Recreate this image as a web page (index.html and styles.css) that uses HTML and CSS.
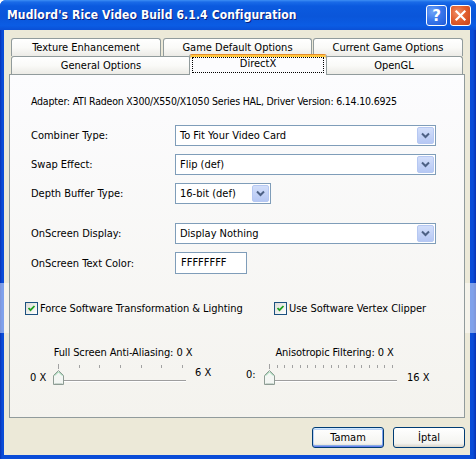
FILE: index.html
```html
<!DOCTYPE html>
<html>
<head>
<meta charset="utf-8">
<link rel="stylesheet" href="styles.css">
</head>
<body>
<div class="window">
  <div class="titlebar">
    <span class="title">Mudlord's Rice Video Build 6.1.4 Configuration</span>
    <div class="tbtns">
      <span class="tbtn help">?</span>
      <span class="tbtn close"><svg width="13" height="13" viewBox="0 0 13 13"><path d="M2.5 2.5 L10.5 10.5 M10.5 2.5 L2.5 10.5" stroke="#fff" stroke-width="2.2" stroke-linecap="square"/></svg></span>
    </div>
  </div>
  <div class="client">
    <div class="tabs">
      <div class="tabrow">
        <div class="tab t-tex">Texture Enhancement</div>
        <div class="tab t-gdo">Game Default Options</div>
        <div class="tab t-cgo">Current Game Options</div>
      </div>
      <div class="tabrow">
        <div class="tab t-gen">General Options</div>
        <div class="tab sel t-dx"><span class="focus">DirectX</span></div>
        <div class="tab t-ogl">OpenGL</div>
      </div>
    </div>
    <div class="panel">
      <div class="adapter">Adapter: ATI Radeon X300/X550/X1050 Series HAL, Driver Version: 6.14.10.6925</div>
      <div class="row r-comb">
        <span class="lbl">Combiner Type:</span>
        <div class="combo wide"><span class="val">To Fit Your Video Card</span><span class="arrow"><svg width="9" height="7" viewBox="0 0 9 7"><path d="M1 1.5 L4.5 5 L8 1.5" fill="none" stroke="#4D6185" stroke-width="2"/></svg></span></div>
      </div>
      <div class="row r-swap">
        <span class="lbl">Swap Effect:</span>
        <div class="combo wide"><span class="val">Flip (def)</span><span class="arrow"><svg width="9" height="7" viewBox="0 0 9 7"><path d="M1 1.5 L4.5 5 L8 1.5" fill="none" stroke="#4D6185" stroke-width="2"/></svg></span></div>
      </div>
      <div class="row r-depth">
        <span class="lbl">Depth Buffer Type:</span>
        <div class="combo short"><span class="val">16-bit (def)</span><span class="arrow"><svg width="9" height="7" viewBox="0 0 9 7"><path d="M1 1.5 L4.5 5 L8 1.5" fill="none" stroke="#4D6185" stroke-width="2"/></svg></span></div>
      </div>
      <div class="row r-osd">
        <span class="lbl">OnScreen Display:</span>
        <div class="combo wide"><span class="val">Display Nothing</span><span class="arrow"><svg width="9" height="7" viewBox="0 0 9 7"><path d="M1 1.5 L4.5 5 L8 1.5" fill="none" stroke="#4D6185" stroke-width="2"/></svg></span></div>
      </div>
      <div class="row r-color">
        <span class="lbl">OnScreen Text Color:</span>
        <div class="tbox">FFFFFFFF</div>
      </div>
      <div class="checks">
        <div class="chk chk1"><span class="box"><svg width="11" height="11" viewBox="0 0 11 11"><path d="M2.5 5 L4.5 7.2 L8.5 3" fill="none" stroke="#21A121" stroke-width="1.8"/></svg></span><span>Force Software Transformation &amp; Lighting</span></div>
        <div class="chk"><span class="box"><svg width="11" height="11" viewBox="0 0 11 11"><path d="M2.5 5 L4.5 7.2 L8.5 3" fill="none" stroke="#21A121" stroke-width="1.8"/></svg></span><span>Use Software Vertex Clipper</span></div>
      </div>
      <div class="slabels">
        <span class="sl1">Full Screen Anti-Aliasing: 0 X</span>
        <span class="sl2">Anisotropic Filtering: 0 X</span>
      </div>
      <div class="sliders">
        <span class="smin1">0 X</span>
        <div class="sw">
          <div class="ticks t1">
            <i class="tick first"></i><i class="tick"></i><i class="tick"></i><i class="tick"></i><i class="tick"></i><i class="tick"></i><i class="tick"></i>
          </div>
          <div class="track"></div>
          <svg class="thumb" width="11" height="15" viewBox="0 0 11 15"><path d="M0.5 14.5 L0.5 5.5 L5.5 0.5 L10.5 5.5 L10.5 14.5 Z" fill="#F3F6F3" stroke="#8E9C94"/><path d="M1.5 5.8 L5.5 1.8 L9.5 5.8" fill="none" stroke="#8FD0A8"/><path d="M1.5 13.5 L9.5 13.5" stroke="#C9D6CE"/></svg>
        </div>
        <span class="smax1">6 X</span>
        <span class="smin2">0:</span>
        <div class="sw">
          <div class="ticks t2">
            <i class="tick first"></i><i class="tick"></i><i class="tick"></i><i class="tick"></i><i class="tick"></i><i class="tick"></i><i class="tick"></i><i class="tick"></i><i class="tick"></i><i class="tick"></i><i class="tick"></i><i class="tick"></i><i class="tick"></i><i class="tick"></i><i class="tick"></i><i class="tick"></i><i class="tick"></i>
          </div>
          <div class="track"></div>
          <svg class="thumb" width="11" height="15" viewBox="0 0 11 15"><path d="M0.5 14.5 L0.5 5.5 L5.5 0.5 L10.5 5.5 L10.5 14.5 Z" fill="#F3F6F3" stroke="#8E9C94"/><path d="M1.5 5.8 L5.5 1.8 L9.5 5.8" fill="none" stroke="#8FD0A8"/><path d="M1.5 13.5 L9.5 13.5" stroke="#C9D6CE"/></svg>
        </div>
        <span class="smax2">16 X</span>
      </div>
    </div>
    <div class="buttons">
      <button class="btn def">Tamam</button>
      <button class="btn">İptal</button>
    </div>
  </div>
  <div class="band"></div>
</div>
</body>
</html>
```

FILE: styles.css
```css
* { box-sizing: border-box; }
html, body { margin: 0; padding: 0; }
body {
  width: 476px; height: 459px; overflow: hidden;
  font-family: "DejaVu Sans Condensed", "DejaVu Sans", "Liberation Sans", sans-serif;
  font-size: 11px; color: #000; background: #fff;
}
.window {
  position: relative; width: 476px; height: 459px;
  display: flex; flex-direction: column;
  background: linear-gradient(to right, #0832B4 0, #0A4CD8 2px, #0A4CD8 473px, #0832B4 476px);
  border-radius: 6px 6px 0 0; overflow: hidden;
}
.titlebar {
  height: 30px; flex: none;
  display: flex; align-items: center; justify-content: space-between;
  padding: 0 5px 0 7px;
  background: linear-gradient(#3E8FF4 0, #1A6BE8 2px, #0B5ADF 6px, #0A56DA 55%, #0B5CE4 85%, #0A50D6 100%);
}
.title {
  color: #fff; font-weight: bold; font-size: 12px; letter-spacing: 0.12px;
  text-shadow: 1px 1px 0 #0A1E7A;
}
.tbtns { display: flex; gap: 3px; margin-top: 1px; }
.tbtn {
  width: 21px; height: 21px; border: 1px solid #fff; border-radius: 3px;
  display: flex; align-items: center; justify-content: center;
  color: #fff; font-weight: bold; font-size: 15px; font-family: "DejaVu Sans", sans-serif;
}
.help { background: radial-gradient(circle at 30% 30%, #6FA4F8 0, #3A78EC 45%, #1F5AD8 100%); }
.close { background: radial-gradient(circle at 35% 35%, #F0906A 0, #E2602F 45%, #C8421A 100%); }

.client {
  flex: 1; margin: 0 6px 4px 4px; background: #ECE9D8;
  display: flex; flex-direction: column; padding: 8px 5px 0 5px;
}
.tabs { position: relative; z-index: 2; padding-left: 2px; }
.tabrow { display: flex; height: 18px; }
.tab {
  height: 18px; border: 1px solid #919B9C; border-bottom: none;
  border-radius: 3px 3px 0 0;
  background: linear-gradient(#FFFFFF, #FAFAF8 50%, #ECEBE6);
  text-align: center; line-height: 18px; white-space: nowrap;
}
.t-tex { width: 150px; }
.t-gdo { width: 149px; margin-left: 2px; }
.t-cgo { width: 150px; margin-left: 1px; }
.t-gen { width: 180px; }
.t-ogl { width: 138px; }
.tab.sel {
  position: relative; z-index: 3;
  width: 138px; height: 21px; margin: -2px -2px 0 -2px;
  background: #FCFCFE;
  border-top: 1px solid #E68B2C;
  box-shadow: inset 0 2px 0 #FFC73C;
}
.focus {
  display: block; height: 16px; margin: 2px 2px 0 2px;
  border: 1px dotted #000; line-height: 12px;
}

.panel {
  position: relative; z-index: 1;
  height: 344px; border: 1px solid #919B9C;
  background: linear-gradient(#FCFCFE, #F4F3EE);
  padding: 20px 0 0 21px;
  display: flex; flex-direction: column;
}
.adapter { height: 13px; line-height: 13px; white-space: nowrap; font-size: 10.5px; letter-spacing: -0.2px; }
.row { display: flex; align-items: center; }
.r-comb { margin-top: 17px; }
.r-swap { margin-top: 8px; }
.r-depth { margin-top: 8px; }
.r-osd { margin-top: 19px; }
.r-color { margin-top: 8px; }
.lbl { width: 144px; flex: none; }
.combo {
  display: flex; height: 21px; padding: 1px;
  border: 1px solid #7F9DB9; background: #fff;
}
.combo.wide { width: 261px; }
.combo.short { width: 96px; }
.val { flex: 1; padding-left: 3px; line-height: 17px; white-space: nowrap; }
.arrow {
  width: 17px; height: 17px; border: 1px solid #B6C8F2; border-radius: 2px;
  background: linear-gradient(#D2DEFA, #B6C8F4);
  display: flex; align-items: center; justify-content: center;
}
.tbox {
  width: 72px; height: 22px; border: 1px solid #7F9DB9; background: #fff;
  padding-left: 5px; line-height: 20px;
}
.checks { display: flex; align-items: center; height: 13px; margin: 28px 0 0 -6px; }
.chk { display: flex; align-items: center; gap: 2px; white-space: nowrap; letter-spacing: -0.05px; }
.chk1 { width: 249px; }
.box {
  width: 13px; height: 13px; border: 1px solid #1C5180;
  background: linear-gradient(135deg, #DCDCD7, #FFFFFF);
  display: flex;
}
.slabels { display: flex; height: 13px; line-height: 13px; margin: 31px 0 0 -1px; white-space: nowrap; letter-spacing: -0.1px; }
.sl1 { width: 186px; text-align: center; }
.sl2 { width: 237px; text-align: center; }
.sliders { display: flex; align-items: flex-start; height: 22px; margin: 4px 0 0 -1px; white-space: nowrap; }
.smin1 { width: 23px; padding-top: 8px; line-height: 13px; }
.smax1 { width: 50px; margin-left: 9px; padding-top: 3px; line-height: 13px; }
.smin2 { width: 19px; padding: 5px 0 0 1px; line-height: 13px; }
.smax2 { margin-left: 10px; padding-top: 8px; line-height: 13px; }
.sw { position: relative; width: 133px; height: 22px; flex: none; }
.ticks { display: flex; justify-content: space-between; height: 6px; padding-top: 1px; }
.t1 { padding-left: 5px; padding-right: 3px; }
.t2 { padding-left: 5px; padding-right: 4px; }
.tick { display: block; width: 1px; height: 3px; margin-top: 1px; background: #A2A2A2; }
.tick.first { height: 5px; margin-top: 0; }
.track {
  position: absolute; left: 3px; right: 0; top: 17px; height: 2px;
  border-top: 1px solid #9E9E9E; border-bottom: 1px solid #FFFFFF;
}
.thumb { position: absolute; left: 0; top: 7px; }

.buttons { display: flex; justify-content: flex-end; gap: 9px; margin-top: 9px; }
.btn {
  width: 72px; height: 21px; padding: 0;
  font: inherit; color: #000;
  border: 1px solid #003C74; border-radius: 3px;
  background: linear-gradient(#FFFFFF, #F4F4F0 80%, #D8D3C8);
}
.btn.def {
  box-shadow: inset 0 1px 0 #CEE7FF, inset 0 -1px 0 #6982EE, inset 1px 0 0 #B8D0F6, inset -1px 0 0 #7FA0EE,
              inset 0 2px 0 #BCD4F6, inset 0 -2px 0 #89ADE4;
}
.band {
  position: absolute; left: 0; right: 0; top: 283px; height: 50px;
  background: rgba(255, 255, 255, 0.48);
  pointer-events: none;
}
```
